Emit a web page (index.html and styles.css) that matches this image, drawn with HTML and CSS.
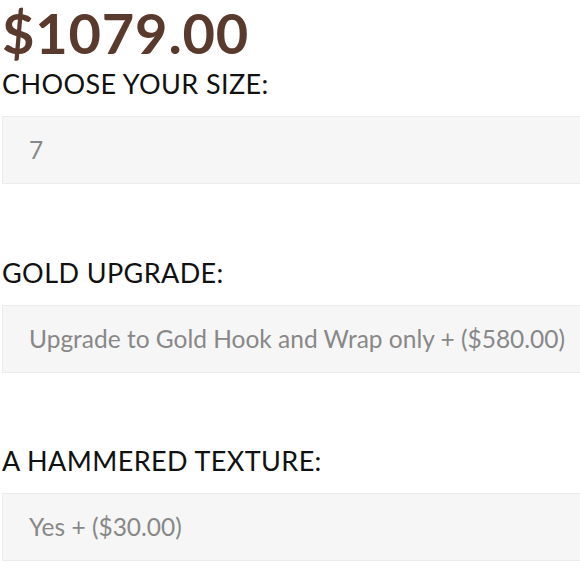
FILE: index.html
```html
<!DOCTYPE html>
<html lang="en">
<head>
  <meta charset="UTF-8">
  <meta name="viewport" content="width=device-width, initial-scale=1.0">
  <title>Product Options</title>
  <link rel="stylesheet" href="styles.css">
</head>
<body>
  <div class="product">
    <div class="price">$1079.00</div>

    <div class="option">
      <label class="option-label">CHOOSE YOUR SIZE:</label>
      <div class="select-box">7</div>
    </div>

    <div class="option">
      <label class="option-label">GOLD UPGRADE:</label>
      <div class="select-box">Upgrade to Gold Hook and Wrap only + ($580.00)</div>
    </div>

    <div class="option">
      <label class="option-label">A HAMMERED TEXTURE:</label>
      <div class="select-box">Yes + ($30.00)</div>
    </div>
  </div>
</body>
</html>
```

FILE: styles.css
```css
body {
  margin: 0;
  background: #fff;
  font-family: Lato, "Open Sans", sans-serif;
  overflow: hidden;
}

.product {
  padding-left: 2px;
  width: 600px;
}

.price {
  font-size: 56px;
  font-weight: 700;
  color: #5b3a2e;
  line-height: 66px;
  letter-spacing: 0.8px;
}

.option {
  margin-bottom: 70.5px;
}

.option-label {
  display: block;
  font-size: 27px;
  font-weight: 400;
  color: #111;
  line-height: 36px;
  margin-bottom: 14px;
  letter-spacing: 0.4px;
}

.select-box {
  height: 66px;
  line-height: 66px;
  background: #f6f6f6;
  border: 1px solid #ececec;
  padding-left: 26px;
  font-size: 24.5px;
  font-weight: 400;
  color: #888;
  white-space: nowrap;
}
```
